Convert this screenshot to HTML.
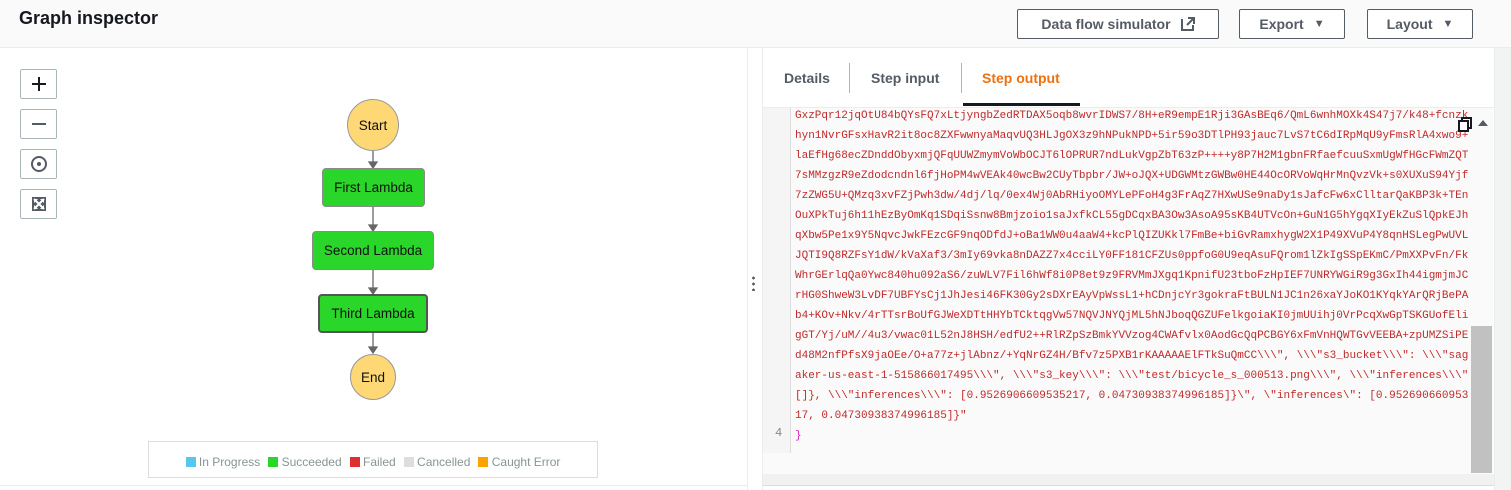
<!DOCTYPE html>
<html><head><meta charset="utf-8"><style>
*{box-sizing:border-box;margin:0;padding:0}
body{width:1511px;height:490px;background:#fff;font-family:"Liberation Sans",sans-serif;position:relative;overflow:hidden;color:#16191f}
.abs{position:absolute}
.hdr{left:0;top:0;width:1511px;height:48px;background:#fafafa;border-bottom:1px solid #eaeded}
.title{left:19px;top:8px;font-size:18px;font-weight:bold;color:#16191f}
.btn{top:9px;height:30px;border:1px solid #545b64;background:#fff;border-radius:2px;font-size:14px;font-weight:bold;color:#545b64;display:flex;align-items:center;justify-content:center;gap:10px}
.zb{left:20px;width:37px;height:30px;border:1px solid #aab7b8;border-radius:2px;background:#fff;display:flex;align-items:center;justify-content:center}
.node{display:flex;align-items:center;justify-content:center;font-size:13.5px;color:#111}
.rect{background:#2bd62b;border:1px solid #8a8a8a;border-radius:4px}
.circ{background:#ffd876;border:1px solid #999;border-radius:50%}
.tab{top:70px;font-size:14px;font-weight:bold;color:#545b64}
.code{font-family:"Liberation Mono",monospace;font-size:11px;color:#c12a2a;line-height:20px;white-space:pre}
</style></head><body>
<div class="abs hdr"></div>
<div class="abs title">Graph inspector</div>
<div class="abs btn" style="left:1017px;width:202px">Data flow simulator <svg width="14" height="14" viewBox="0 0 14 14"><path d="M1 2v11h11V8" fill="none" stroke="#545b64" stroke-width="2"/><path d="M7 1h6v6M13 1L6 8" fill="none" stroke="#545b64" stroke-width="2"/></svg></div>
<div class="abs btn" style="left:1239px;width:106px">Export <span style="font-size:11px">▼</span></div>
<div class="abs btn" style="left:1367px;width:106px">Layout <span style="font-size:11px">▼</span></div>

<div class="abs" style="left:747px;top:48px;width:1px;height:442px;background:#eaeded"></div>
<div class="abs" style="left:762px;top:48px;width:1px;height:442px;background:#eaeded"></div>
<div class="abs" style="left:1494px;top:48px;width:17px;height:442px;background:#f2f3f3;border-left:1px solid #eaeded"></div>
<div class="abs" style="left:752px;top:275px;width:3px;height:16px;background:radial-gradient(circle,#545b64 1.3px,transparent 1.5px) 0 0/3px 6px"></div>

<div class="abs zb" style="top:69px"><svg width="16" height="16"><path d="M8 1v14M1 8h14" stroke="#16191f" stroke-width="2"/></svg></div>
<div class="abs zb" style="top:109px"><svg width="16" height="16"><path d="M1 8h14" stroke="#545b64" stroke-width="2"/></svg></div>
<div class="abs zb" style="top:149px"><svg width="18" height="18"><circle cx="9" cy="9" r="7" fill="none" stroke="#545b64" stroke-width="2"/><circle cx="9" cy="9" r="2" fill="#545b64"/></svg></div>
<div class="abs zb" style="top:189px"><svg width="16" height="16"><rect x="1" y="1" width="14" height="14" fill="#545b64"/><path d="M3 3l10 10M13 3L3 13" stroke="#fff" stroke-width="2"/><path d="M3 3h4L3 7zM13 3h-4l4 4zM3 13h4l-4-4zM13 13h-4l4-4z" fill="#fff"/></svg></div>

<svg class="abs" style="left:0;top:0" width="747" height="440">
<g stroke="#666" stroke-width="1.3" fill="#666">
<path d="M373 151v13"/><path d="M369 162h8l-4 6z"/>
<path d="M373 207v20"/><path d="M369 225h8l-4 6z"/>
<path d="M373 270v20"/><path d="M369 288h8l-4 6z"/>
<path d="M373 333v16"/><path d="M369 347h8l-4 6z"/>
</g></svg>
<div class="abs node circ" style="left:347px;top:99px;width:52px;height:52px">Start</div>
<div class="abs node rect" style="left:322px;top:168px;width:103px;height:39px">First Lambda</div>
<div class="abs node rect" style="left:312px;top:231px;width:122px;height:39px">Second Lambda</div>
<div class="abs node rect" style="left:318px;top:294px;width:110px;height:39px;border:2px solid #555">Third Lambda</div>
<div class="abs node circ" style="left:350px;top:354px;width:46px;height:46px">End</div>

<div class="abs" style="left:148px;top:441px;width:450px;height:37px;border:1px solid #ddd;font-size:12px;color:#879596;display:flex;align-items:center;justify-content:center;gap:8px;padding-top:4px">
<span><span style="display:inline-block;width:10px;height:10px;background:#56c8ef;vertical-align:-1px"></span> In Progress</span>
<span><span style="display:inline-block;width:10px;height:10px;background:#2bd62b;vertical-align:-1px"></span> Succeeded</span>
<span><span style="display:inline-block;width:10px;height:10px;background:#dd3030;vertical-align:-1px"></span> Failed</span>
<span><span style="display:inline-block;width:10px;height:10px;background:#ddd;vertical-align:-1px"></span> Cancelled</span>
<span><span style="display:inline-block;width:10px;height:10px;background:#ffa200;vertical-align:-1px"></span> Caught Error</span>
</div>
<div class="abs" style="left:0;top:485px;width:747px;height:1px;background:#eaeded"></div>

<div class="abs tab" style="left:784px">Details</div>
<div class="abs tab" style="left:871px">Step input</div>
<div class="abs tab" style="left:982px;color:#ec7211">Step output</div>
<div class="abs" style="left:849px;top:63px;width:1px;height:30px;background:#aab7b8"></div>
<div class="abs" style="left:961px;top:63px;width:1px;height:30px;background:#aab7b8"></div>
<div class="abs" style="left:963px;top:103px;width:117px;height:3px;background:#16191f"></div>
<div class="abs" style="left:763px;top:107px;width:731px;height:1px;background:#eaeded"></div>

<div class="abs" style="left:763px;top:108px;width:707px;height:366px;background:#fafafa"></div>
<div class="abs" style="left:763px;top:108px;width:28px;height:345px;background:#f5f5f5;border-right:1px solid #ddd"></div>
<div class="abs" style="left:775px;top:426px;font-size:12px;color:#888;font-family:'Liberation Mono',monospace">4</div>
<div class="abs code" style="left:795px;top:106px">GxzPqr12jqOtU84bQYsFQ7xLtjyngbZedRTDAX5oqb8wvrIDWS7/8H+eR9empE1Rji3GAsBEq6/QmL6wnhMOXk4S47j7/k48+fcnzk
hyn1NvrGFsxHavR2it8oc8ZXFwwnyaMaqvUQ3HLJgOX3z9hNPukNPD+5ir59o3DTlPH93jauc7LvS7tC6dIRpMqU9yFmsRlA4xwo9+
laEfHg68ecZDnddObyxmjQFqUUWZmymVoWbOCJT6lOPRUR7ndLukVgpZbT63zP++++y8P7H2M1gbnFRfaefcuuSxmUgWfHGcFWmZQT
7sMMzgzR9eZdodcndnl6fjHoPM4wVEAk40wcBw2CUyTbpbr/JW+oJQX+UDGWMtzGWBw0HE44OcORVoWqHrMnQvzVk+s0XUXuS94Yjf
7zZWG5U+QMzq3xvFZjPwh3dw/4dj/lq/0ex4Wj0AbRHiyoOMYLePFoH4g3FrAqZ7HXwUSe9naDy1sJafcFw6xClltarQaKBP3k+TEn
OuXPkTuj6h11hEzByOmKq1SDqiSsnw8Bmjzoio1saJxfkCL55gDCqxBA3Ow3AsoA95sKB4UTVcOn+GuN1G5hYgqXIyEkZuSlQpkEJh
qXbw5Pe1x9Y5NqvcJwkFEzcGF9nqODfdJ+oBa1WW0u4aaW4+kcPlQIZUKkl7FmBe+biGvRamxhygW2X1P49XVuP4Y8qnHSLegPwUVL
JQTI9Q8RZFsY1dW/kVaXaf3/3mIy69vka8nDAZZ7x4cciLY0FF181CFZUs0ppfoG0U9eqAsuFQrom1lZkIgSSpEKmC/PmXXPvFn/Fk
WhrGErlqQa0Ywc840hu092aS6/zuWLV7Fil6hWf8i0P8et9z9FRVMmJXgq1KpnifU23tboFzHpIEF7UNRYWGiR9g3GxIh44igmjmJC
rHG0ShweW3LvDF7UBFYsCj1JhJesi46FK30Gy2sDXrEAyVpWssL1+hCDnjcYr3gokraFtBULN1JC1n26xaYJoKO1KYqkYArQRjBePA
b4+KOv+Nkv/4rTTsrBoUfGJWeXDTtHHYbTCktqgVw57NQVJNYQjML5hNJboqQGZUFelkgoiaKI0jmUUihj0VrPcqXwGpTSKGUofEli
gGT/Yj/uM//4u3/vwac01L52nJ8HSH/edfU2++RlRZpSzBmkYVVzog4CWAfvlx0AodGcQqPCBGY6xFmVnHQWTGvVEEBA+zpUMZSiPE
d48M2nfPfsX9jaOEe/O+a77z+jlAbnz/+YqNrGZ4H/Bfv7z5PXB1rKAAAAAElFTkSuQmCC\\\", \\\"s3_bucket\\\": \\\"sag
aker-us-east-1-515866017495\\\", \\\"s3_key\\\": \\\"test/bicycle_s_000513.png\\\", \\\"inferences\\\"
[]}, \\\"inferences\\\": [0.9526906609535217, 0.04730938374996185]}\", \"inferences\": [0.952690660953
17, 0.04730938374996185]}"
<span style="color:#e020c0">}</span></div>

<div class="abs" style="left:1470px;top:108px;width:23px;height:366px;background:#fafafa"></div>
<div class="abs" style="left:1471px;top:326px;width:21px;height:147px;background:#c1c1c1"></div>
<div class="abs" style="left:763px;top:474px;width:731px;height:11px;background:#f1f1f1"></div>
<div class="abs" style="left:763px;top:485px;width:731px;height:1px;background:#ddd"></div>

<svg class="abs" style="left:1457px;top:115px" width="32" height="18"><rect x="2" y="6" width="9" height="10" fill="#fff" stroke="#16191f" stroke-width="2"/><path d="M5 6V3h9v10h-3" fill="none" stroke="#16191f" stroke-width="2"/><path d="M21 11l5-6 5 6z" fill="#545b64"/></svg>
</body></html>
